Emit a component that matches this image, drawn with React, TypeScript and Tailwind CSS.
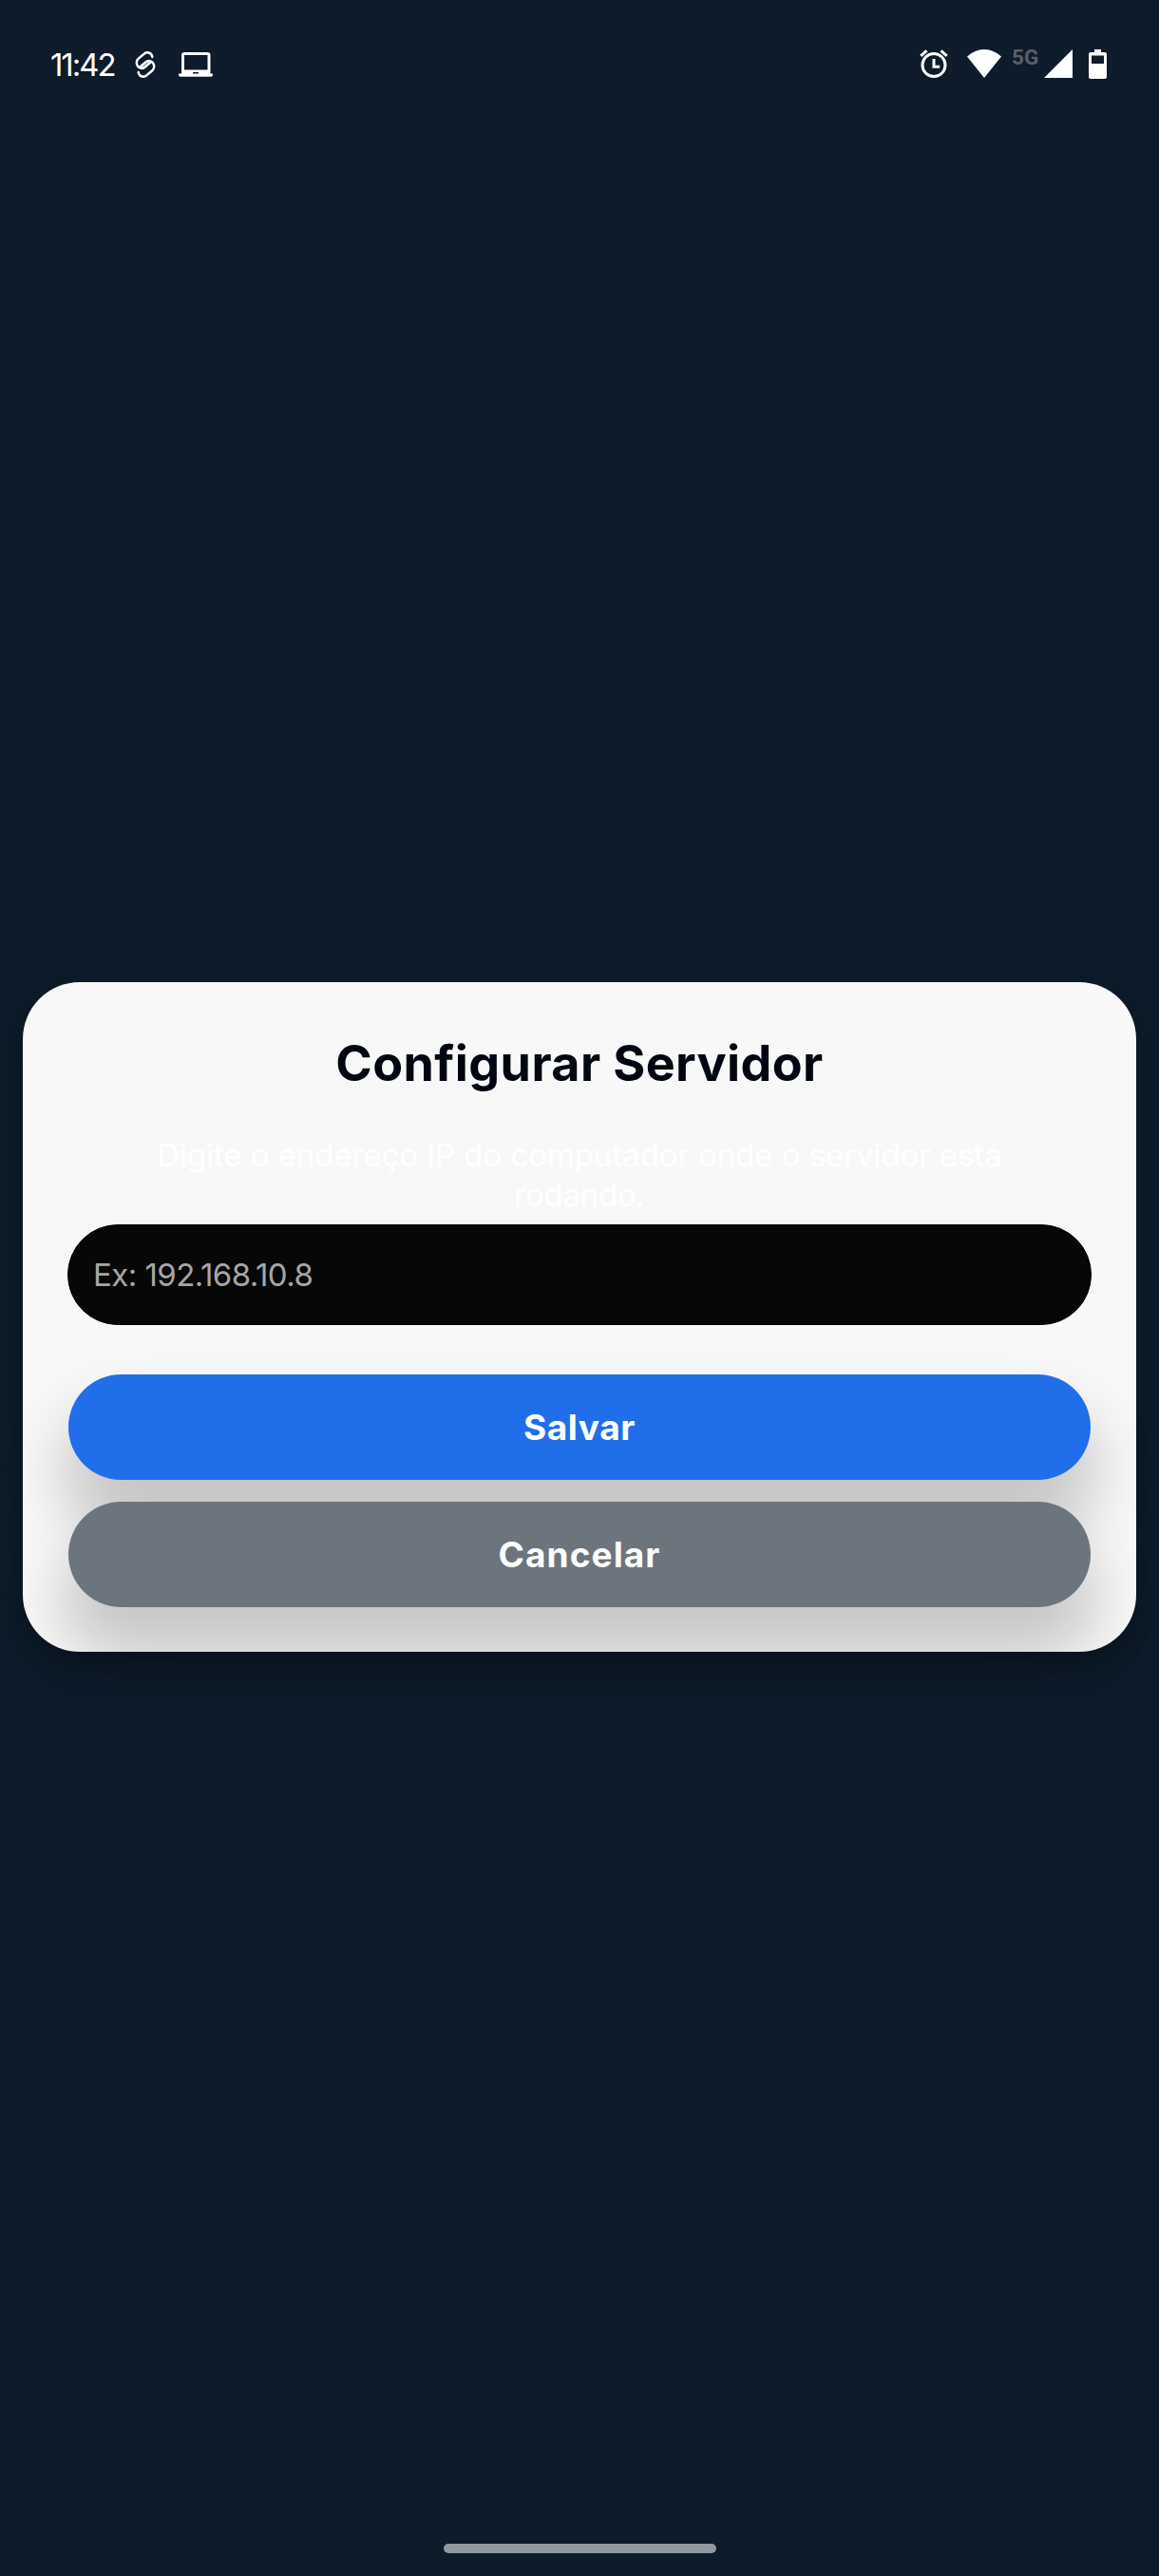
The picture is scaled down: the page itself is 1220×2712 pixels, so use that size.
function LinkIcon() {
  return (
    <svg className="mt-[54px] ml-[20px] shrink-0" width="22" height="28" viewBox="0 0 22 28" fill="none" stroke="currentColor" strokeWidth="2.4" strokeLinecap="round">
      <g transform="translate(11 14) scale(1.02 1.1) rotate(-38)">
        <path d="M5 1.500H-1.900A5.200 5.200 0 0 1-1.900-8.900H5.700A5.200 5.200 0 0 1 10.200-1.300" />
        <path d="M-5-1.500H1.900A5.200 5.200 0 0 1 1.900 8.900H-5.700A5.200 5.200 0 0 1-10.200 1.300" />
      </g>
    </svg>
  );
}

function LaptopIcon() {
  return (
    <svg className="mt-[55px] ml-[24px] shrink-0" width="36" height="26" viewBox="0 0 36 26" fill="currentColor">
      <path fillRule="evenodd" d="M6 0h24.500a3 3 0 0 1 3 3v19.500H36v1.300a2 2 0 0 1-2 2H2a2 2 0 0 1-2-2v-1.300h3V3a3 3 0 0 1 3-3zM6 3v15.500h24.500V3zM15 21v1.500h6V21z" />
    </svg>
  );
}

function AlarmIcon() {
  return (
    <svg className="mt-[52px] shrink-0" width="30" height="30" viewBox="0 0 30 30" fill="none" stroke="currentColor" strokeWidth="3">
      <circle cx="15" cy="16.500" r="12" />
      <path d="M15 10v8.200h6.200" />
      <path d="M1.300 6.800l6.200-5.500M28.700 6.800l-6.200-5.500" />
    </svg>
  );
}

function StatusBar() {
  return (
    <header className="flex h-[134px] shrink-0 items-start justify-between pr-[55px] pl-[53px] text-white">
      <div className="flex items-start">
        <span className="mt-[48px] w-[69px] text-[33px] leading-[40px] tracking-[-2.05px] whitespace-nowrap">11:42</span>
        <LinkIcon />
        <LaptopIcon />
      </div>
      <div className="flex items-start">
        <AlarmIcon />
        <svg className="mt-[52px] ml-[20px] shrink-0" width="36" height="30" viewBox="0 0 36 30" fill="currentColor">
          <path d="M0 7.500Q8 0 18 0T36 7.500L18 30z" />
        </svg>
        <span className="mt-[46px] ml-[11px] w-[34px] font-['Roboto',sans-serif] text-[22.5px] leading-[28px] font-bold text-[#566069]">5G</span>
        <svg className="mt-[52px] shrink-0" width="30" height="30" viewBox="0 0 30 30" fill="currentColor">
          <path d="M30 0v30H0z" />
        </svg>
        <svg className="mt-[52px] ml-[17px] shrink-0" width="19" height="31" viewBox="0 0 19 31" fill="currentColor">
          <path fillRule="evenodd" d="M6 0h7v3h4a2 2 0 0 1 2 2v24a2 2 0 0 1-2 2H2a2 2 0 0 1-2-2V5a2 2 0 0 1 2-2h4zM3 6.500v8.500h13V6.500z" />
        </svg>
      </div>
    </header>
  );
}

export default function App() {
  return (
    <main className="flex h-[2712px] w-[1220px] flex-col overflow-hidden bg-[#0d1b2a] font-['Inter',sans-serif] text-white">
      <StatusBar />
      <section className="mx-6 mt-[900px] flex h-[705px] flex-col rounded-[60px] bg-[#f8f8f8] px-[47px] pt-[54px] shadow-[0_12px_36px_rgba(0,0,0,0.27)]">
        <h1 className="text-center text-[52px] leading-[64px] font-bold tracking-[0.42px] text-[#000610]">Configurar Servidor</h1>
        <p className="mt-[43px] text-center text-[33px] leading-[42px] tracking-[-0.07px]">
          Digite o endereço IP do computador onde o servidor está
          <br />
          <span className="tracking-[-0.25px]">rodando.</span>
        </p>
        <input
          type="text"
          placeholder="Ex: 192.168.10.8"
          className="mt-[10px] h-[106px] shrink-0 rounded-full border border-black bg-[#070707] px-[26px] text-[33px] tracking-[-0.55px] text-white outline-none placeholder:text-[#a6a6a6]"
        />
        <div className="mx-px mt-[52px] flex flex-col gap-[23px]">
          <button className="h-[111px] rounded-full bg-[#206eea] text-[37px] font-bold tracking-[0.6px] shadow-[0_46px_64px_8px_rgba(0,0,0,0.2)]">Salvar</button>
          <button className="h-[111px] rounded-full bg-[#6c757d] text-[37px] font-bold tracking-[1.1px] shadow-[0_46px_64px_8px_rgba(0,0,0,0.2)]">Cancelar</button>
        </div>
      </section>
      <footer className="mt-auto flex justify-center pb-[24px]">
        <div className="h-[10px] w-[287px] rounded-full bg-[#9298a0]" />
      </footer>
    </main>
  );
}
